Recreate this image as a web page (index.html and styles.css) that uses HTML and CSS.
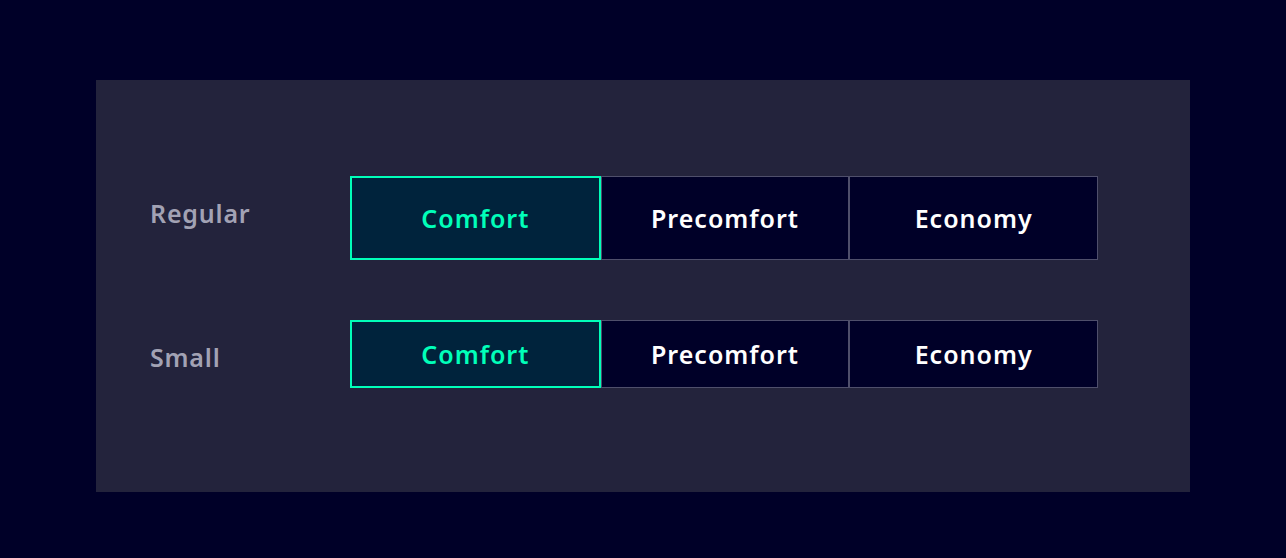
FILE: index.html
```html
<!DOCTYPE html>
<html>
<head>
<meta charset="utf-8">
<link rel="stylesheet" href="styles.css">
</head>
<body>
<div class="panel">
  <div class="row">
    <div class="label">Regular</div>
    <div class="group regular">
      <div class="btn selected">Comfort</div>
      <div class="btn">Precomfort</div>
      <div class="btn">Economy</div>
    </div>
  </div>
  <div class="row">
    <div class="label">Small</div>
    <div class="group small">
      <div class="btn selected">Comfort</div>
      <div class="btn">Precomfort</div>
      <div class="btn">Economy</div>
    </div>
  </div>
</div>
</body>
</html>
```
FILE: styles.css
```css
html, body {
  margin: 0;
  padding: 0;
  background: #000028;
  height: 100%;
}
body {
  padding: 80px 96px 0 96px;
  box-sizing: border-box;
  font-family: "Noto Sans", "Open Sans", sans-serif;
}
.panel {
  width: 1094px;
  height: 412px;
  background: #23233c;
  box-sizing: border-box;
  padding: 96px 0 0 54px;
  display: flex;
  flex-direction: column;
  gap: 60px;
}
.row {
  display: flex;
  align-items: flex-start;
}
.label {
  width: 200px;
  color: #a2a2b4;
  font-size: 25px;
  font-weight: 600;
  line-height: 32px;
  padding-top: 21px;
  letter-spacing: 0.8px;
}
.group {
  display: flex;
  width: 748px;
}
.regular { height: 84px; }
.small { height: 68px; }
.btn {
  flex: 1;
  box-sizing: border-box;
  border: 1px solid #4f4f6b;
  background: #000028;
  color: #ffffff;
  font-size: 25px;
  font-weight: 600;
  letter-spacing: 1px;
  display: flex;
  align-items: center;
  justify-content: center;
}
.btn.selected {
  border: 2px solid #00ffb9;
  background: #00233c;
  color: #00ffb9;
}
```
